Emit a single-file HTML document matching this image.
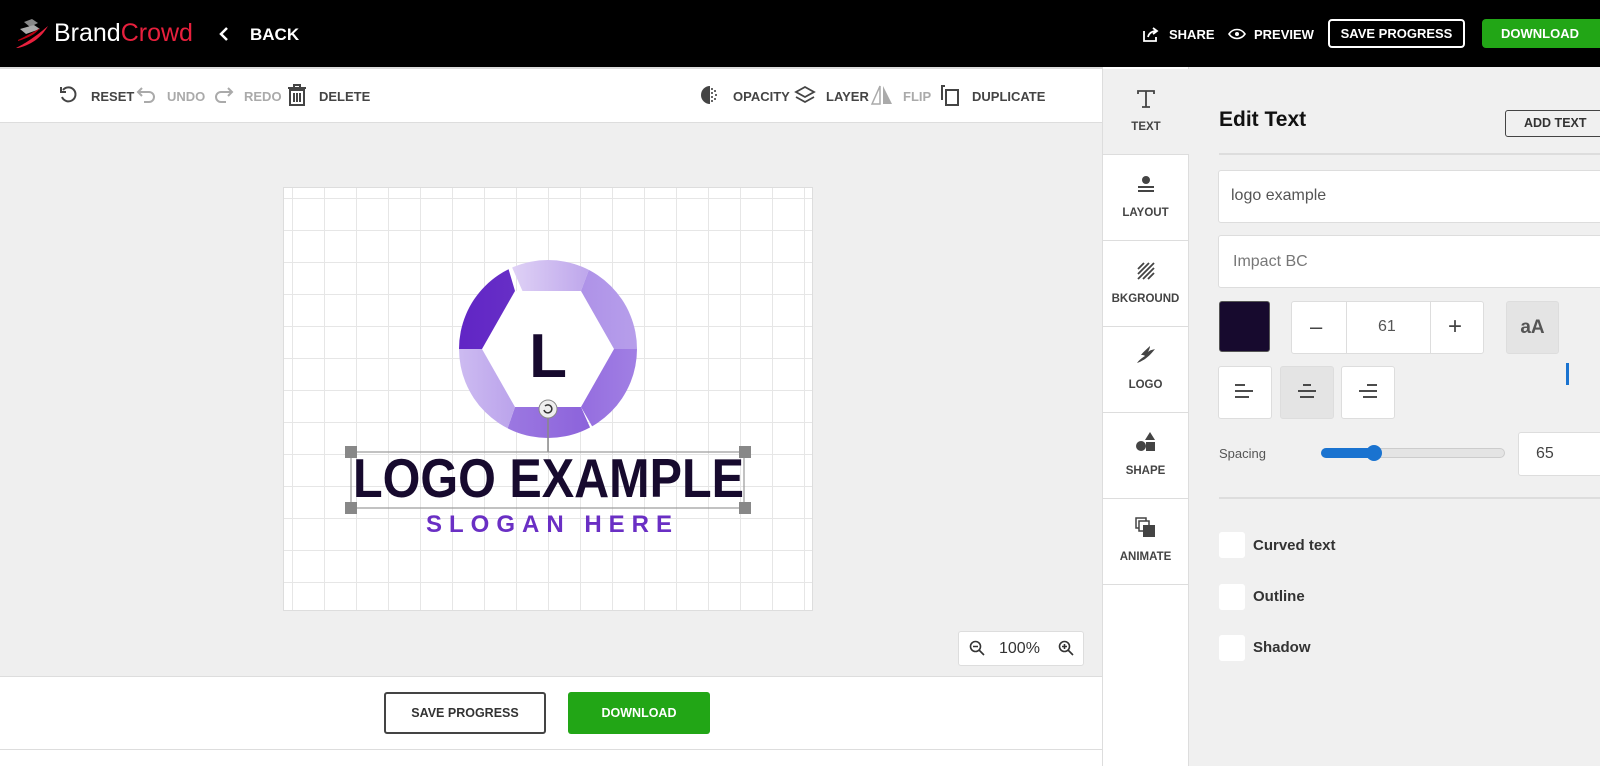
<!DOCTYPE html>
<html><head><meta charset="utf-8"><style>
*{box-sizing:border-box;margin:0;padding:0}
body{width:1600px;height:766px;overflow:hidden;font-family:"Liberation Sans",sans-serif;background:#fff;position:relative}
.abs{position:absolute}
.top{left:0;top:0;width:1600px;height:67px;background:#000;color:#fff}
.tb{font-size:13px;font-weight:bold;color:#444}
.dis{color:#aaa}
.tab{position:absolute;left:1102px;width:87px;height:86px;background:#fff;border-bottom:1px solid #ddd;border-left:1px solid #ddd;border-right:1px solid #ddd;text-align:center;font-size:11.5px;font-weight:bold;color:#444}
.tab span{position:absolute;left:0;right:0;top:52px}
.box{position:absolute;background:#fff;border:1px solid #ddd;border-radius:3px}
.chk{position:absolute;left:1219px;width:26px;height:26px;background:#fff;border-radius:3px}
.lbl{position:absolute;left:1253px;font-size:15px;font-weight:bold;color:#333}
</style></head><body>
<div class="abs top">
  <svg class="abs" style="left:14px;top:18px" width="36" height="32" viewBox="0 0 36 32"><path d="M10 4l8-3 6 4-8 4z" fill="#888"/><path d="M6 11l14-4 6 4-14 5z" fill="#aaa"/><path d="M2 30c8-4 18-10 32-22-6 10-14 18-30 22z" fill="#e8203d"/><path d="M4 22c6-3 14-7 22-12-4 6-12 10-22 13z" fill="#b01"/></svg>
  <div class="abs" style="left:54px;top:19px;font-size:25px;color:#fff">Brand<span style="color:#e8203d">Crowd</span></div>
  <svg class="abs" style="left:218px;top:26px" width="12" height="16"><path d="M9 2L3 8l6 6" stroke="#fff" stroke-width="2.5" fill="none"/></svg>
  <div class="abs" style="left:250px;top:25px;font-size:17px;font-weight:bold">BACK</div>
  <svg class="abs" style="left:1143px;top:27px" width="16" height="15"><path d="M1 4v10h12v-4M5 10c1-4 4-6 9-6M10 1l4 3-4 3" stroke="#fff" stroke-width="1.8" fill="none"/></svg>
  <div class="abs" style="left:1169px;top:27px;font-size:13px;font-weight:bold">SHARE</div>
  <svg class="abs" style="left:1228px;top:28px" width="18" height="12"><path d="M1 6c4-6 12-6 16 0-4 6-12 6-16 0z" stroke="#fff" stroke-width="1.6" fill="none"/><circle cx="9" cy="6" r="2" fill="#fff"/></svg>
  <div class="abs" style="left:1254px;top:27px;font-size:13px;font-weight:bold">PREVIEW</div>
  <div class="abs" style="left:1328px;top:19px;width:137px;height:29px;border:2px solid #fff;border-radius:4px;text-align:center;line-height:25px;font-size:13px;font-weight:bold">SAVE PROGRESS</div>
  <div class="abs" style="left:1482px;top:19px;width:130px;height:29px;background:#22a616;border-radius:4px;padding-left:19px;line-height:29px;font-size:13px;font-weight:bold">DOWNLOAD</div>
</div>
<div class="abs" style="left:0;top:67px;width:1102px;height:56px;background:#fff;border-top:2px solid #ddd;border-bottom:1px solid #ddd"></div>
<svg class="abs" style="left:59px;top:85px" width="20" height="20"><path d="M4 5a7 7 0 1 1-1 7" stroke="#444" stroke-width="2" fill="none"/><path d="M2 2v5h5" stroke="#444" stroke-width="2" fill="none"/></svg>
<div class="abs tb" style="left:91px;top:89px">RESET</div>
<svg class="abs" style="left:136px;top:86px" width="22" height="18"><path d="M6 2L2 6l4 4M2 6h11a5 5 0 0 1 0 10H8" stroke="#aaa" stroke-width="2" fill="none"/></svg>
<div class="abs tb dis" style="left:167px;top:89px">UNDO</div>
<svg class="abs" style="left:212px;top:86px" width="22" height="18"><path d="M16 2l4 4-4 4M20 6H9a5 5 0 0 0 0 10h5" stroke="#aaa" stroke-width="2" fill="none"/></svg>
<div class="abs tb dis" style="left:244px;top:89px">REDO</div>
<svg class="abs" style="left:287px;top:84px" width="20" height="22"><path d="M1 4h18M7 4V1h6v3M3 6h14v15H3zM7 9v9M10 9v9M13 9v9" stroke="#444" stroke-width="2" fill="none"/></svg>
<div class="abs tb" style="left:319px;top:89px">DELETE</div>
<svg class="abs" style="left:700px;top:85px" width="20" height="20"><path d="M10 1a9 9 0 0 0 0 18z" fill="#444"/><g fill="#666"><rect x="11" y="3" width="2" height="2"/><rect x="14" y="5" width="2" height="2"/><rect x="11" y="7" width="2" height="2"/><rect x="15" y="9" width="2" height="2"/><rect x="11" y="11" width="2" height="2"/><rect x="14" y="13" width="2" height="2"/><rect x="11" y="15" width="2" height="2"/></g></svg>
<div class="abs tb" style="left:733px;top:89px">OPACITY</div>
<svg class="abs" style="left:794px;top:85px" width="22" height="20"><path d="M11 2l9 5-9 5-9-5zM2 12l9 5 9-5" stroke="#444" stroke-width="1.8" fill="none"/></svg>
<div class="abs tb" style="left:826px;top:89px">LAYER</div>
<svg class="abs" style="left:870px;top:84px" width="24" height="22"><path d="M10 2L2 20h8z" stroke="#aaa" stroke-width="1.5" fill="none"/><path d="M13 2l9 18h-9z" fill="#aaa"/></svg>
<div class="abs tb dis" style="left:903px;top:89px">FLIP</div>
<svg class="abs" style="left:939px;top:84px" width="24" height="24"><path d="M6 2H3v14M7 6h12v15H7z" stroke="#444" stroke-width="2" fill="none"/></svg>
<div class="abs tb" style="left:972px;top:89px">DUPLICATE</div>
<div class="abs" style="left:0;top:123px;width:1102px;height:553px;background:#efefef"></div>
<div class="abs" style="left:283px;top:187px;width:530px;height:424px;background-color:#fff;border:1px solid #ddd;background-image:linear-gradient(to right,#e6e6e6 1px,transparent 1px),linear-gradient(to bottom,#e6e6e6 1px,transparent 1px);background-size:32px 32px;background-position:8px 10px"></div>
<svg class="abs" style="left:283px;top:187px" width="530" height="424" viewBox="283 187 530 424">
<defs>
<linearGradient id="g1" x1="0" x2="1"><stop offset="0" stop-color="#e4d8f7"/><stop offset="1" stop-color="#b9a0ea"/></linearGradient>
<linearGradient id="g2" x1="0" x2="1"><stop offset="0" stop-color="#a98be6"/><stop offset="1" stop-color="#baa3ec"/></linearGradient>
<linearGradient id="g3" x1="0" x2="1"><stop offset="0" stop-color="#8d62dc"/><stop offset="1" stop-color="#a687e6"/></linearGradient>
<linearGradient id="g4" x1="0" x2="1"><stop offset="0" stop-color="#9d7ae2"/><stop offset="1" stop-color="#8a60da"/></linearGradient>
<linearGradient id="g5" x1="0" x2="1"><stop offset="0" stop-color="#d3c3f3"/><stop offset="1" stop-color="#b095e8"/></linearGradient>
<linearGradient id="g6" x1="0" x2="1"><stop offset="0" stop-color="#5f22c4"/><stop offset="1" stop-color="#6a34c8"/></linearGradient>
<clipPath id="c"><circle cx="548" cy="349" r="89"/></clipPath>
</defs>
<g clip-path="url(#c)">
<polygon points="548,349 500,240 600,240 581,291 515,291" fill="url(#g1)"/>
<polygon points="548,349 581,291 600,240 660,300 660,349 614,349" fill="url(#g2)"/>
<polygon points="548,349 614,349 660,349 660,420 600,440 581,407" fill="url(#g3)"/>
<polygon points="548,349 581,407 600,450 500,450 515,407" fill="url(#g4)"/>
<polygon points="548,349 515,407 500,450 440,420 440,349 482,349" fill="url(#g5)"/>
<polygon points="548,349 482,349 440,349 440,280 500,240 515,291" fill="url(#g6)"/>
</g>
<polygon points="515,291 581,291 614,349 581,407 515,407 482,349" fill="#fff"/>
<text x="548" y="377" text-anchor="middle" font-family="Liberation Sans" font-weight="bold" font-size="62" fill="#170a2e">L</text>
<line x1="548" y1="417" x2="548" y2="452" stroke="#888" stroke-width="1.5"/>
<circle cx="548" cy="409" r="9" fill="#eee" stroke="#888"/>
<path d="M545 406a4 4 0 1 1-1 4" stroke="#333" stroke-width="1.5" fill="none"/>
<rect x="351" y="452" width="393" height="56" fill="none" stroke="#999" stroke-width="1.2"/>
<g fill="#888"><rect x="345" y="446" width="12" height="12"/><rect x="739" y="446" width="12" height="12"/><rect x="345" y="502" width="12" height="12"/><rect x="739" y="502" width="12" height="12"/></g>
<text x="353" y="497" textLength="391" lengthAdjust="spacingAndGlyphs" font-family="Liberation Sans" font-weight="bold" font-size="55" fill="#170a2e">LOGO EXAMPLE</text>
<text x="426" y="532" textLength="246" lengthAdjust="spacing" font-family="Liberation Sans" font-weight="bold" font-size="24" fill="#6a2fc4">SLOGAN HERE</text>
</svg>
<div class="abs" style="left:958px;top:631px;width:126px;height:35px;background:#fff;border:1px solid #ddd;border-radius:3px"></div>
<svg class="abs" style="left:969px;top:640px" width="16" height="16"><circle cx="6.5" cy="6.5" r="5" stroke="#333" stroke-width="1.6" fill="none"/><path d="M10 10l5 5M4 6.5h5" stroke="#333" stroke-width="1.6"/></svg>
<div class="abs" style="left:999px;top:640px;font-size:16px;color:#333">100%</div>
<svg class="abs" style="left:1058px;top:640px" width="16" height="16"><circle cx="6.5" cy="6.5" r="5" stroke="#333" stroke-width="1.6" fill="none"/><path d="M10 10l5 5M4 6.5h5M6.5 4v5" stroke="#333" stroke-width="1.6"/></svg>
<div class="abs" style="left:0;top:676px;width:1102px;height:90px;background:#fff;border-top:1px solid #ddd"></div>
<div class="abs" style="left:0;top:749px;width:1102px;height:17px;border-top:1px solid #ddd;background:#fff"></div>
<div class="abs" style="left:384px;top:692px;width:162px;height:42px;border:2px solid #444;border-radius:3px;text-align:center;line-height:38px;font-size:12.5px;font-weight:bold;color:#333">SAVE PROGRESS</div>
<div class="abs" style="left:568px;top:692px;width:142px;height:42px;background:#22a616;border-radius:3px;text-align:center;line-height:42px;font-size:12.5px;font-weight:bold;color:#fff">DOWNLOAD</div>
<div class="abs" style="left:1102px;top:67px;width:87px;height:699px;background:#fff;border-left:1px solid #ddd;border-right:1px solid #ddd"></div>
<div class="tab" style="top:69px;background:#f0f0f0;border-right:none"><svg class="abs" style="left:33px;top:20px" width="20" height="20"><path d="M2 5V2h16v3M10 2v16M6 18h8" stroke="#444" stroke-width="1.8" fill="none"/></svg><span>TEXT</span></div>
<div class="tab" style="top:155px"><svg class="abs" style="left:33px;top:20px" width="20" height="20"><circle cx="10" cy="5" r="4" fill="#444"/><rect x="2" y="11" width="16" height="2" fill="#444"/><rect x="2" y="15" width="16" height="2" fill="#444"/></svg><span>LAYOUT</span></div>
<div class="tab" style="top:241px"><svg class="abs" style="left:33px;top:20px" width="20" height="20"><path d="M2 8l6-6M2 13l11-11M2 18l16-16M7 18l11-11M12 18l6-6" stroke="#444" stroke-width="1.8"/></svg><span>BKGROUND</span></div>
<div class="tab" style="top:327px"><svg class="abs" style="left:32px;top:18px" width="22" height="20"><path d="M2 18c6-2 12-6 18-14-3 1-5 1-7 3 1-2 2-4 2-6-3 3-6 5-9 9 2 0 3 0 4 1-3 2-6 4-8 7z" fill="#444"/></svg><span>LOGO</span></div>
<div class="tab" style="top:413px"><svg class="abs" style="left:32px;top:18px" width="22" height="22"><circle cx="6" cy="15" r="5" fill="#444"/><rect x="11" y="11" width="9" height="9" fill="#444"/><path d="M15 1l5 8h-10z" fill="#444"/></svg><span>SHAPE</span></div>
<div class="tab" style="top:499px"><svg class="abs" style="left:32px;top:18px" width="22" height="22"><rect x="1" y="1" width="10" height="10" fill="none" stroke="#444" stroke-width="1.5"/><rect x="4" y="4" width="10" height="10" fill="#fff" stroke="#444" stroke-width="1.5"/><rect x="8" y="8" width="12" height="12" fill="#444"/></svg><span>ANIMATE</span></div>
<div class="abs" style="left:1189px;top:67px;width:411px;height:699px;background:#f0f0f0"></div>
<div class="abs" style="left:1219px;top:108px;font-size:21px;font-weight:bold;color:#111">Edit Text</div>
<div class="abs" style="left:1505px;top:110px;width:110px;height:27px;border:1.5px solid #444;border-radius:3px;padding-left:18px;line-height:24px;font-size:12.5px;font-weight:bold;color:#333">ADD TEXT</div>
<div class="abs" style="left:1219px;top:153px;width:381px;height:2px;background:#ddd"></div>
<div class="box" style="left:1218px;top:170px;width:400px;height:53px"></div>
<div class="abs" style="left:1231px;top:187px;font-size:16px;color:#555">logo example</div>
<div class="box" style="left:1218px;top:235px;width:400px;height:53px"></div>
<div class="abs" style="left:1233px;top:253px;font-size:16px;color:#777">Impact BC</div>
<div class="abs" style="left:1219px;top:301px;width:51px;height:51px;background:#170a2e;border:1px solid #555;border-radius:3px"></div>
<div class="box" style="left:1291px;top:301px;width:193px;height:53px"></div>
<div class="abs" style="left:1346px;top:301px;width:1px;height:53px;background:#ddd"></div>
<div class="abs" style="left:1430px;top:301px;width:1px;height:53px;background:#ddd"></div>
<div class="abs" style="left:1310px;top:314px;font-size:22px;color:#444">–</div>
<div class="abs" style="left:1378px;top:318px;font-size:16px;color:#555">61</div>
<div class="abs" style="left:1448px;top:313px;font-size:24px;color:#444">+</div>
<div class="abs" style="left:1506px;top:301px;width:53px;height:53px;background:#e4e4e4;border:1px solid #ddd;border-radius:3px;text-align:center;line-height:51px;font-size:19px;font-weight:bold;color:#555">aA</div>
<div class="abs" style="left:1566px;top:363px;width:3px;height:22px;background:#1a73d0"></div>
<div class="box" style="left:1218px;top:366px;width:54px;height:53px"></div>
<div class="box" style="left:1280px;top:366px;width:54px;height:53px;background:#e4e4e4"></div>
<div class="box" style="left:1341px;top:366px;width:54px;height:53px"></div>
<svg class="abs" style="left:1234px;top:382px" width="22" height="20"><path d="M1 3h10M1 9h18M1 15h14" stroke="#333" stroke-width="1.8"/></svg>
<svg class="abs" style="left:1296px;top:382px" width="22" height="20"><path d="M7 3h8M2 9h18M4 15h14" stroke="#333" stroke-width="1.8"/></svg>
<svg class="abs" style="left:1357px;top:382px" width="22" height="20"><path d="M10 3h10M2 9h18M6 15h14" stroke="#333" stroke-width="1.8"/></svg>
<div class="abs" style="left:1219px;top:446px;font-size:13px;color:#555">Spacing</div>
<div class="abs" style="left:1321px;top:448px;width:184px;height:10px;border-radius:5px;background:#e4e4e4;border:1px solid #ccc"></div>
<div class="abs" style="left:1321px;top:448px;width:55px;height:10px;border-radius:5px;background:#1a73d0"></div>
<div class="abs" style="left:1366px;top:445px;width:16px;height:16px;border-radius:50%;background:#1a73d0"></div>
<div class="box" style="left:1518px;top:432px;width:90px;height:44px"></div>
<div class="abs" style="left:1536px;top:445px;font-size:16px;color:#444">65</div>
<div class="abs" style="left:1219px;top:497px;width:381px;height:2px;background:#ddd"></div>
<div class="chk" style="top:532px"></div><div class="lbl" style="top:537px">Curved text</div>
<div class="chk" style="top:584px"></div><div class="lbl" style="top:588px">Outline</div>
<div class="chk" style="top:635px"></div><div class="lbl" style="top:639px">Shadow</div>
</body></html>
